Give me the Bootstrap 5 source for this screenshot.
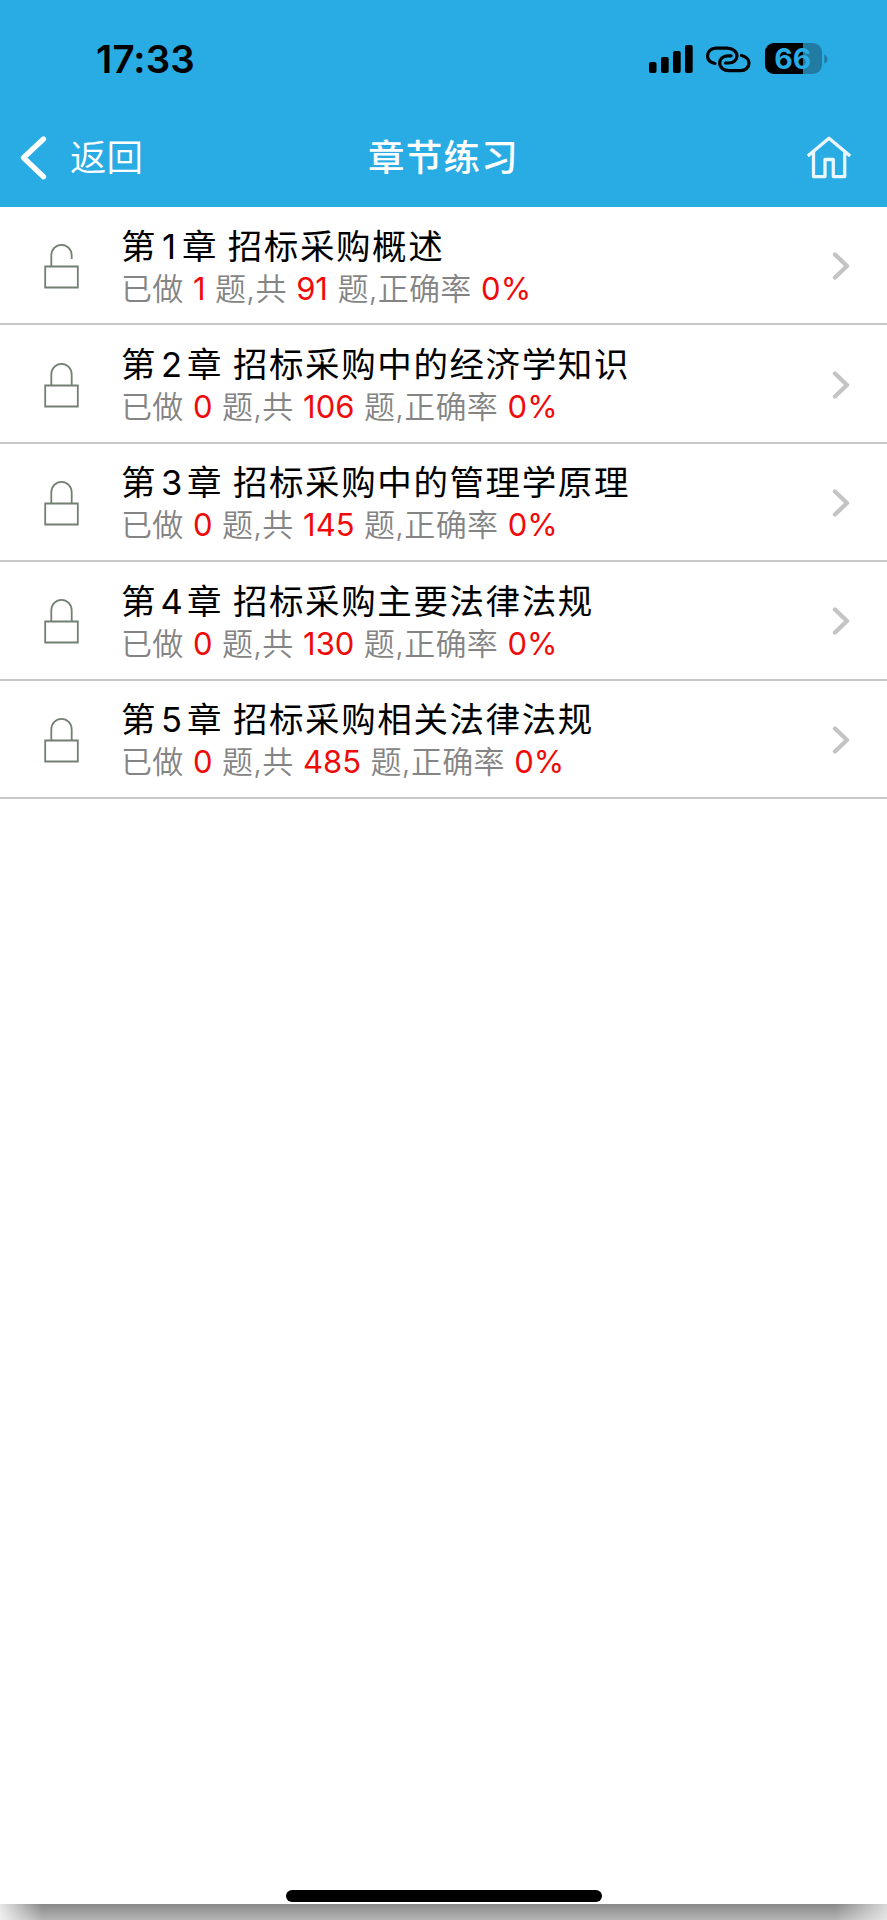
<!DOCTYPE html>
<html lang="zh-CN">
<head>
<meta charset="utf-8">
<meta name="viewport" content="width=device-width, initial-scale=1">
<title>章节练习</title>
<link href="https://cdn.jsdelivr.net/npm/bootstrap@5.3.0/dist/css/bootstrap.min.css" rel="stylesheet">
<style>
  body { font-family: Inter, "Noto Sans CJK SC", sans-serif; color: #000; background: #fff; }
  .screen { height: 1920px; overflow: hidden; }
  .top-area { background: #29abe4; height: 207px; }
  .status-bar { height: 108px; padding: 10px 59px 0 96px; }
  .clock { font-size: 38.5px; font-weight: 600; line-height: 1; letter-spacing: .1px; }
  .title-bar { height: 99px; padding: 0 20px; color: #fff; }
  .side { flex: 1 1 0; }
  .back-text { font-size: 36.5px; font-weight: 350; line-height: 1; margin-left: 22px; padding-top: 2px; }
  .page-title { font-size: 36.5px; font-weight: 500; line-height: 1; letter-spacing: 1.3px; padding-top: 2px; }
  .home-icon { margin-right: 16px; }
  .chapter { height: 118.4px; border-bottom: 2px solid #c8c8c8; padding: 2px 37px 0 43px; }
  .chapter-text { margin-left: 42px; white-space: nowrap; padding-top: 2px; }
  .chapter-name { font-size: 34.5px; line-height: 43px; letter-spacing: 1.6px; word-spacing: -1.6px; }
  .chapter-name b { display: inline-block; width: 30px; padding-right: 1px; text-align: center; font-weight: 400; letter-spacing: 0; }
  .chapter-name b.narrow { width: 24.8px; }
  .progress-text { font-size: 31px; line-height: 42px; letter-spacing: .3px; word-spacing: .4px; color: #848484; font-weight: 350; }
  .progress-text b { color: #f00a0a; font-weight: 400; letter-spacing: 0; }
  .home-indicator { width: 316px; height: 12px; border-radius: 6px; background: #000; margin-bottom: 2px; }
  .bottom-shade { height: 16px; background: linear-gradient(90deg, #fffc 0, #fff0 42px, #fff0 835px, #fffa 887px), linear-gradient(#888, #b5b5b5); }
</style>
</head>
<body>
<div class="screen d-flex flex-column">
  <header class="top-area flex-shrink-0">
    <div class="status-bar d-flex align-items-center justify-content-between">
      <span class="clock">17:33</span>
      <svg width="180" height="34" viewBox="648 42 180 34" role="img" aria-label="66">
        <rect x="649" y="62" width="7.5" height="11" rx="2"/>
        <rect x="661" y="57" width="7.7" height="16" rx="2"/>
        <rect x="673" y="51" width="7.7" height="22" rx="2"/>
        <rect x="685" y="45" width="7.7" height="28" rx="2"/>
        <g fill="none" stroke="#000" stroke-width="3.2" stroke-linecap="round">
          <path d="M715 63.500C710 62.500 707.500 59.500 707.500 56C707.500 51.500 711 48.200 716 48.200H727C733 48.200 737 51.500 737 56C737 60 733.500 63 729 63H725.500"/>
          <path d="M741.500 55.500C746 56.500 749 59.500 749 63C749 67.500 745.500 70.700 740.500 70.700H729C723.500 70.700 719.700 67.500 719.700 63C719.700 59 723 55.800 727.500 55.800H731"/>
        </g>
        <clipPath id="cell"><rect x="765" y="43" width="57" height="31" rx="9"/></clipPath>
        <g clip-path="url(#cell)">
          <rect x="765" y="43" width="57" height="31" fill="#217ba2"/>
          <rect x="765" y="43" width="38" height="31"/>
        </g>
        <path d="M824.300 54.500Q827.500 56 827.500 59T824.300 63.500Z" fill="#217ba2"/>
        <text x="792.700" y="69" text-anchor="middle" font-family="Inter" font-weight="700" font-size="28.500" textLength="37" fill="#29abe4">66</text>
      </svg>
    </div>
    <nav class="title-bar d-flex align-items-center">
      <div class="side d-flex align-items-center">
        <svg width="28" height="46" viewBox="20 134 28 46"><path d="M43.500 138L23.500 156.800L43.500 175.700" fill="none" stroke="#fff" stroke-width="5.300" stroke-linecap="round" stroke-linejoin="round"/></svg>
        <span class="back-text">返回</span>
      </div>
      <h1 class="page-title m-0">章节练习</h1>
      <div class="side d-flex justify-content-end">
        <svg class="home-icon" width="44" height="44" viewBox="807 135 44 44" fill="none" stroke="#fff" stroke-width="3.300"><path d="M807.800 155L829 137.300L850.200 155M813.500 151V175.600H825V158.500H833.300V175.600H844.700V151" stroke-linejoin="round" opacity=".9"/></svg>
      </div>
    </nav>
  </header>

  <svg class="d-none">
    <symbol id="locked" viewBox="0 0 36 46"><path d="M2.200 23.500H34.800V44.500H2.200ZM8.300 23.500V12.500a10.200 10.700 0 0 1 20.400 0V23.500" fill="none" stroke="#728072" stroke-width="1.800"/></symbol>
    <symbol id="unlocked" viewBox="0 0 36 46"><path d="M2.200 23.500H34.800V44.500H2.200ZM8.300 23.500V12.500a10.200 10.700 0 0 1 20.400 0V16" fill="none" stroke="#728072" stroke-width="1.800"/></symbol>
    <symbol id="next" viewBox="0 0 18 30"><path d="M3 3.500L15 15L3 26.500" fill="none" stroke="#c4c4c4" stroke-width="4.400" stroke-linecap="round" stroke-linejoin="round"/></symbol>
  </svg>

  <main class="flex-grow-1">
    <div class="chapter d-flex align-items-center">
      <svg width="36" height="46"><use href="#unlocked"/></svg>
      <div class="chapter-text flex-grow-1">
        <div class="chapter-name">第<b class="narrow">1</b>章 招标采购概述</div>
        <div class="progress-text">已做 <b>1</b> 题,共 <b>91</b> 题,正确率 <b>0%</b></div>
      </div>
      <svg width="18" height="30"><use href="#next"/></svg>
    </div>
    <div class="chapter d-flex align-items-center">
      <svg width="36" height="46"><use href="#locked"/></svg>
      <div class="chapter-text flex-grow-1">
        <div class="chapter-name">第<b>2</b>章 招标采购中的经济学知识</div>
        <div class="progress-text">已做 <b>0</b> 题,共 <b>106</b> 题,正确率 <b>0%</b></div>
      </div>
      <svg width="18" height="30"><use href="#next"/></svg>
    </div>
    <div class="chapter d-flex align-items-center">
      <svg width="36" height="46"><use href="#locked"/></svg>
      <div class="chapter-text flex-grow-1">
        <div class="chapter-name">第<b>3</b>章 招标采购中的管理学原理</div>
        <div class="progress-text">已做 <b>0</b> 题,共 <b>145</b> 题,正确率 <b>0%</b></div>
      </div>
      <svg width="18" height="30"><use href="#next"/></svg>
    </div>
    <div class="chapter d-flex align-items-center">
      <svg width="36" height="46"><use href="#locked"/></svg>
      <div class="chapter-text flex-grow-1">
        <div class="chapter-name">第<b>4</b>章 招标采购主要法律法规</div>
        <div class="progress-text">已做 <b>0</b> 题,共 <b>130</b> 题,正确率 <b>0%</b></div>
      </div>
      <svg width="18" height="30"><use href="#next"/></svg>
    </div>
    <div class="chapter d-flex align-items-center">
      <svg width="36" height="46"><use href="#locked"/></svg>
      <div class="chapter-text flex-grow-1">
        <div class="chapter-name">第<b>5</b>章 招标采购相关法律法规</div>
        <div class="progress-text">已做 <b>0</b> 题,共 <b>485</b> 题,正确率 <b>0%</b></div>
      </div>
      <svg width="18" height="30"><use href="#next"/></svg>
    </div>
  </main>

  <div class="home-indicator flex-shrink-0 mx-auto"></div>
  <div class="bottom-shade flex-shrink-0"></div>
</div>
<script src="https://cdn.jsdelivr.net/npm/bootstrap@5.3.0/dist/js/bootstrap.bundle.min.js"></script>
</body>
</html>
